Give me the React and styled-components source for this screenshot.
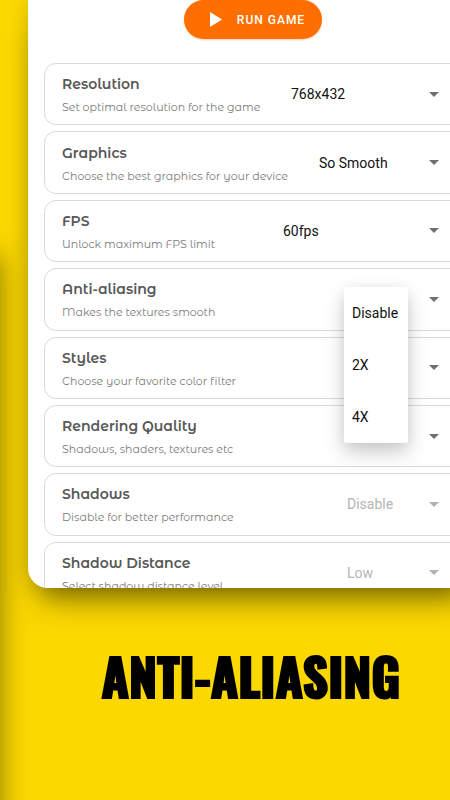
import React from "react";
import styled, { createGlobalStyle } from "styled-components";

const GlobalStyle = createGlobalStyle`
  *, *::before, *::after { box-sizing: border-box; }
  body { margin: 0; background: #fbd800; }
  button, select { font: inherit; }
`;

const Page = styled.main`
  position: relative;
  display: flex;
  flex-direction: column;
  height: 100vh;
  overflow: hidden;
  background: #fbd800;
  font-family: Roboto, "Liberation Sans", sans-serif;

  &::before {
    content: "";
    position: absolute;
    top: 256px;
    bottom: -40px;
    left: -40px;
    width: 40px;
    box-shadow: 0 0 28px rgba(0, 0, 0, 0.45);
  }
`;

const Screen = styled.section`
  position: relative;
  flex: 1;
  min-height: 0;
  width: 100%;
  margin-left: 28px;
  border-radius: 0 0 20px 20px;
  background: #fff;
  box-shadow: 0 22px 30px -12px rgba(0, 0, 0, 0.5), 0 0 20px rgba(0, 0, 0, 0.14);
`;

const ScreenContent = styled.div`
  display: flex;
  flex-direction: column;
  gap: 24px;
  height: 100%;
  padding: 0 16px;
  overflow: hidden;
  border-radius: inherit;
`;

const RunButton = styled.button`
  flex: none;
  align-self: center;
  display: flex;
  align-items: center;
  gap: 15px;
  height: 39px;
  padding: 0 17px 0 26px;
  border: 0;
  border-radius: 20px;
  background: #ff6f00;
  box-shadow: 0 1px 2px rgba(255, 111, 0, 0.3);
  color: #fff;
  font-size: 12px;
  font-weight: 500;
  letter-spacing: 1px;
  white-space: nowrap;

  svg { display: block; }
`;

const SettingList = styled.div`
  flex: none;
  display: grid;
  grid-auto-rows: 1fr;
  gap: 6px;
  min-height: 541px;
`;

const SettingRow = styled.div`
  position: relative;
  z-index: ${({ $raised }) => ($raised ? 1 : 0)};
  display: flex;
  align-items: center;
  justify-content: space-between;
  padding: 0 18px 0 17px;
  border: 1px solid #d9d9d9;
  border-radius: 12px;
`;

const SettingText = styled.div`
  display: flex;
  flex-direction: column;
  gap: 4px;
  padding-top: 2px;
  font-family: "Montserrat Alternates", Inter, sans-serif;
  white-space: nowrap;
`;

const SettingName = styled.label`
  color: #585858;
  font-size: 14px;
  font-weight: 600;
  line-height: 20px;
`;

const SettingHint = styled.span`
  color: #7c7c7c;
  font-size: 11px;
  font-weight: 400;
  line-height: 18px;
`;

const Control = styled.div`
  position: relative;
  flex: none;
  display: grid;
  align-items: center;
  width: ${({ $width }) => $width}px;
  color: ${({ $muted }) => ($muted ? "#b5b5b5" : "#111")};
  font-size: 14px;

  > * { grid-area: 1 / 1; }
`;

const Select = styled.select`
  width: 100%;
  height: 32px;
  padding: 0;
  border: 0;
  appearance: none;
  background: transparent;
  color: inherit;
  opacity: 1;
`;

const MenuButton = styled.button`
  width: 100%;
  height: 32px;
  padding: 0;
  border: 0;
  background: transparent;
`;

const Arrow = styled.svg`
  justify-self: end;
  margin-right: 4px;
  color: ${({ $muted }) => ($muted ? "#b0b0b0" : "#707070")};
  pointer-events: none;
`;

const Menu = styled.div`
  position: absolute;
  top: 4px;
  left: 0;
  border-radius: 2px;
  background: #fff;
  box-shadow: 0 10px 20px rgba(0, 0, 0, 0.2), 0 0 12px rgba(0, 0, 0, 0.06);
`;

const MenuItem = styled.button`
  display: block;
  width: 64px;
  height: 52px;
  padding: 0 8px;
  border: 0;
  background: transparent;
  color: #111;
  font-size: 14px;
  text-align: left;
`;

const Footer = styled.footer`
  flex: none;
  height: 212px;
  padding: 57px 0 0 52px;
  text-align: center;
`;

const Heading = styled.h1`
  margin: 0;
  color: #000;
  font-family: Oswald, Anton, Impact, "Liberation Sans", sans-serif;
  font-size: 50px;
  font-weight: 700;
  line-height: 60px;
  white-space: nowrap;
  -webkit-text-stroke: 2px #000;
`;

const settings = [
  { id: "resolution", name: "Resolution", hint: "Set optimal resolution for the game", value: "768x432", width: 152 },
  { id: "graphics", name: "Graphics", hint: "Choose the best graphics for your device", value: "So Smooth", width: 124 },
  { id: "fps", name: "FPS", hint: "Unlock maximum FPS limit", value: "60fps", width: 160 },
  { id: "aa", name: "Anti-aliasing", hint: "Makes the textures smooth", menu: ["Disable", "2X", "4X"], width: 99 },
  { id: "styles", name: "Styles", hint: "Choose your favorite color filter", value: "", width: 96 },
  { id: "rendering", name: "Rendering Quality", hint: "Shadows, shaders, textures etc", value: "", width: 96 },
  { id: "shadows", name: "Shadows", hint: "Disable for better performance", value: "Disable", width: 96, muted: true },
  { id: "distance", name: "Shadow Distance", hint: "Select shadow distance level", value: "Low", width: 96, muted: true },
];

function Setting({ id, name, hint, value, menu, width, muted }) {
  return (
    <SettingRow $raised={Boolean(menu)}>
      <SettingText>
        <SettingName htmlFor={id}>{name}</SettingName>
        <SettingHint>{hint}</SettingHint>
      </SettingText>
      <Control $width={width} $muted={muted}>
        {menu ? (
          <MenuButton id={id} aria-haspopup="listbox" aria-expanded="true" />
        ) : (
          <Select id={id} defaultValue={value} disabled={muted}>
            <option value={value}>{value}</option>
          </Select>
        )}
        <Arrow $muted={muted} width="10" height="5" viewBox="0 0 10 5" aria-hidden="true">
          <path d="M0 0h10L5 5z" fill="currentColor" />
        </Arrow>
        {menu && (
          <Menu role="listbox" aria-label={name}>
            {menu.map((item) => (
              <MenuItem key={item} role="option" aria-selected={item === "Disable"}>{item}</MenuItem>
            ))}
          </Menu>
        )}
      </Control>
    </SettingRow>
  );
}

export default function App() {
  return (
    <>
      <GlobalStyle />
      <Page>
        <Screen>
          <ScreenContent>
            <RunButton>
              <svg width="12" height="15" viewBox="0 0 12 15" aria-hidden="true">
                <path d="M0 0l12 7.5L0 15z" fill="currentColor" />
              </svg>
              RUN GAME
            </RunButton>
            <SettingList>
              {settings.map((setting) => (
                <Setting key={setting.id} {...setting} />
              ))}
            </SettingList>
          </ScreenContent>
        </Screen>
        <Footer>
          <Heading>ANTI-ALIASING</Heading>
        </Footer>
      </Page>
    </>
  );
}
